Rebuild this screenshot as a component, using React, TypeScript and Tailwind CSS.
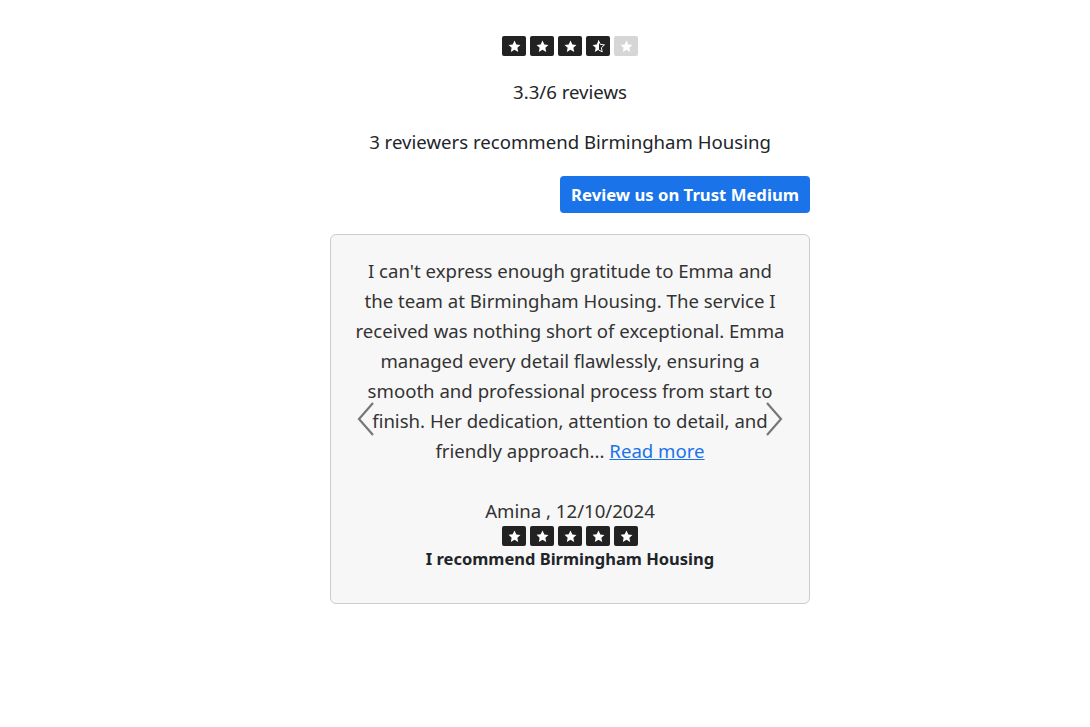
import React from 'react';

const StarBox = ({ variant = 'full' }: { variant?: 'full' | 'half' | 'empty' }) => {
  const bg = variant === 'empty' ? 'bg-[#d6d6d6]' : 'bg-[#222222]';
  return (
    <span className={`flex h-[20px] w-[24px] items-center justify-center rounded-[2px] ${bg}`}>
      <svg viewBox="0 0 24 24" width="15" height="15">
        {variant === 'half' ? (
          <>
            <path d="M12 2.5l2.9 6.1 6.6.8-4.9 4.6 1.3 6.6L12 17.3V2.5z" fill="none" stroke="#fff" strokeWidth="1.6" strokeLinejoin="round" />
            <path d="M12 2.5L9.1 8.6l-6.6.8 4.9 4.6-1.3 6.6L12 17.3z" fill="#fff" />
          </>
        ) : (
          <path d="M12 2.5l2.9 6.1 6.6.8-4.9 4.6 1.3 6.6L12 17.3l-5.9 3.3 1.3-6.6-4.9-4.6 6.6-.8z" fill="#fff" />
        )}
      </svg>
    </span>
  );
};

const Stars = ({ items }: { items: ('full' | 'half' | 'empty')[] }) => (
  <div className="flex justify-center gap-[4px]">
    {items.map((v, i) => (
      <StarBox key={i} variant={v} />
    ))}
  </div>
);

export default function App() {
  return (
    <div className="min-h-[727px] bg-white font-['Noto_Sans',sans-serif] text-[#212529]">
      <div className="ml-[330px] flex w-[480px] flex-col pt-[36px]">
        <Stars items={['full', 'full', 'full', 'half', 'empty']} />
        <p className="mt-[22px] text-center text-[18.6px] leading-[28px]">3.3/6 reviews</p>
        <p className="mt-[22px] text-center text-[18.6px] leading-[28px]">3 reviewers recommend Birmingham Housing</p>
        <div className="mt-[20px] flex justify-end">
          <button className="h-[37px] rounded-[4px] bg-[#1a73e8] px-[11px] text-[16.7px] font-bold text-white">
            Review us on Trust Medium
          </button>
        </div>
        <div className="relative mt-[21px] flex h-[370px] flex-col items-center rounded-[6px] border border-[#cccccc] bg-[#f7f7f7] px-[24px] pt-[21px] text-[#333333]">
          <p className="text-center text-[18.6px] leading-[30px]">
            I can't express enough gratitude to Emma and the team at Birmingham Housing. The service I received was nothing short of exceptional. Emma managed every detail flawlessly, ensuring a smooth and professional process from start to finish. Her dedication, attention to detail, and friendly approach...{' '}
            <a href="#" className="text-[#1a73e8] underline">Read more</a>
          </p>
          <p className="mt-[33px] text-center text-[18.6px] leading-[24px]">Amina , 12/10/2024</p>
          <div className="mt-[3px]">
            <Stars items={['full', 'full', 'full', 'full', 'full']} />
          </div>
          <p className="mt-[1px] text-center text-[16.5px] font-bold leading-[24px] text-[#212529]">I recommend Birmingham Housing</p>
          <button className="absolute left-[24px] top-[166px] text-[#777]">
            <svg width="22" height="36" viewBox="0 0 22 36" fill="none" stroke="currentColor" strokeWidth="2.2">
              <path d="M18 2L4 18l14 16" />
            </svg>
          </button>
          <button className="absolute right-[24px] top-[166px] text-[#777]">
            <svg width="22" height="36" viewBox="0 0 22 36" fill="none" stroke="currentColor" strokeWidth="2.2">
              <path d="M4 2l14 16L4 34" />
            </svg>
          </button>
        </div>
      </div>
    </div>
  );
}
